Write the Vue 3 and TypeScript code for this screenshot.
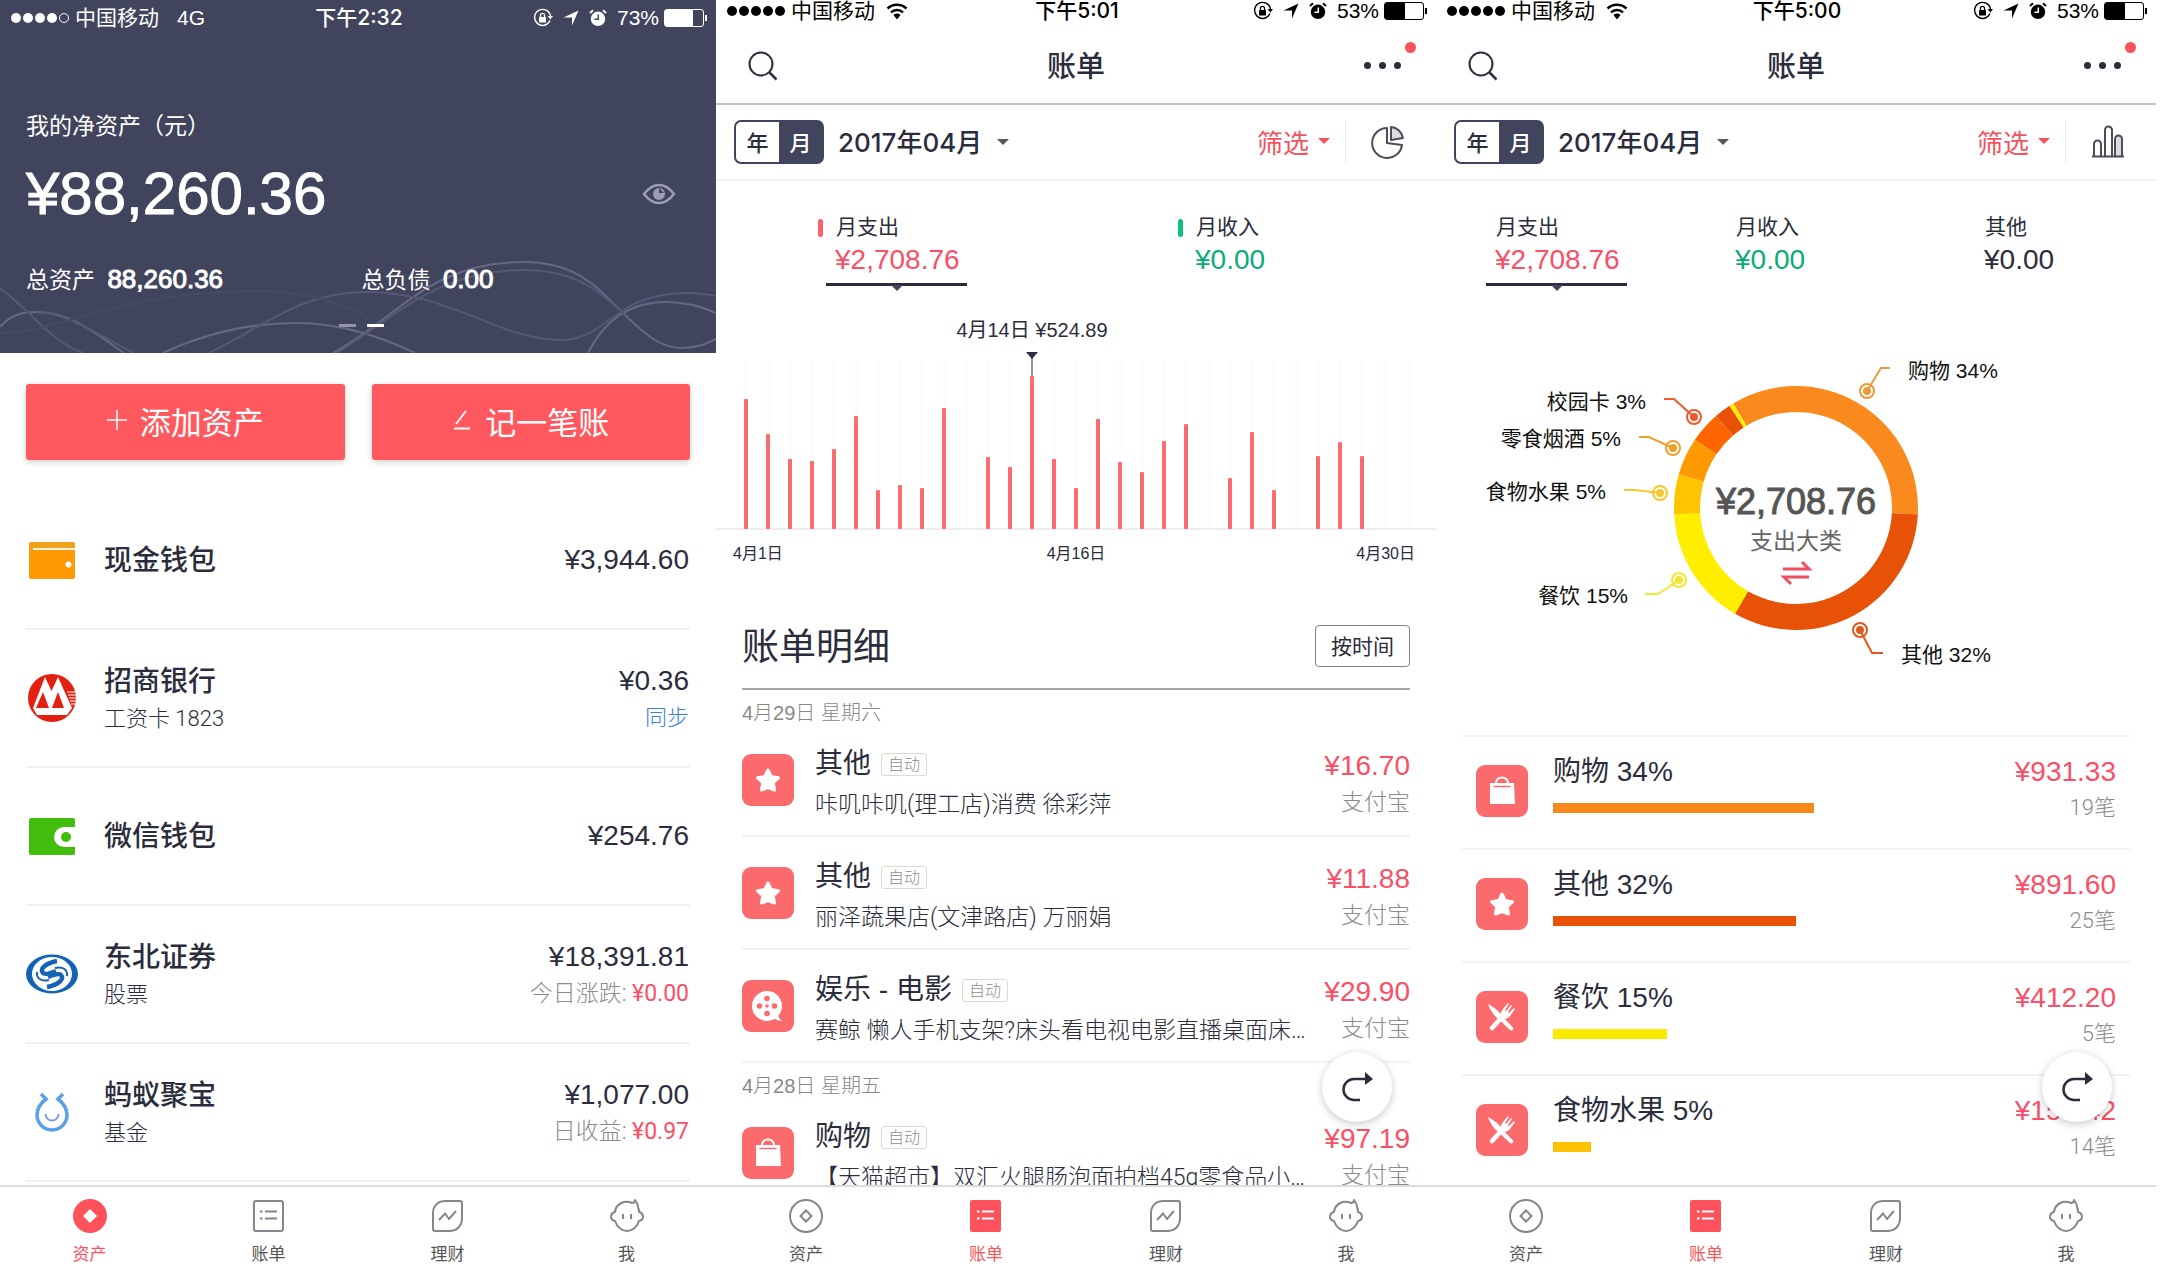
<script setup lang="ts">
interface Phone {
  id: string
  kind: 'assets' | 'bars' | 'donut'
  time: string
  battery: number
  dark: boolean
}

const phones: Phone[] = [
  { id: 'p1', kind: 'assets', time: '下午2:32', battery: 73, dark: true },
  { id: 'p2', kind: 'bars', time: '下午5:01', battery: 53, dark: false },
  { id: 'p3', kind: 'donut', time: '下午5:00', battery: 53, dark: false },
]

const accounts = [
  { icon: 'cash', name: '现金钱包', sub: '', amount: '¥3,944.60', note: '', value: '', link: '' },
  { icon: 'cmb', name: '招商银行', sub: '工资卡 1823', amount: '¥0.36', note: '', value: '', link: '同步' },
  { icon: 'wechat', name: '微信钱包', sub: '', amount: '¥254.76', note: '', value: '', link: '' },
  { icon: 'stock', name: '东北证券', sub: '股票', amount: '¥18,391.81', note: '今日涨跌:', value: '¥0.00', link: '' },
  { icon: 'ant', name: '蚂蚁聚宝', sub: '基金', amount: '¥1,077.00', note: '日收益:', value: '¥0.97', link: '' },
]

const tabs = [
  { icon: 'coin', label: '资产' },
  { icon: 'list', label: '账单' },
  { icon: 'leaf', label: '理财' },
  { icon: 'face', label: '我' },
]

function isActive(phone: Phone, icon: string): boolean {
  return icon === (phone.kind === 'assets' ? 'coin' : 'list')
}

const barStats = [
  { label: '月支出', value: '¥2,708.76', tone: 'red', current: true },
  { label: '月收入', value: '¥0.00', tone: 'green', current: false },
]
const donutStats = [...barStats, { label: '其他', value: '¥0.00', tone: 'ink', current: false }]

const dayHeights: number[] = [
  130, 95, 70, 68, 80, 113, 39, 44, 41, 121, 0, 72, 62, 153, 70, 41, 110, 67, 57, 88, 105, 0, 51, 97, 39, 0, 73, 87,
  73, 0,
]
const dayX = (index: number): number => 30 + index * 22

const groups = [
  {
    date: '4月29日 星期六',
    items: [
      { icon: 'star', title: '其他', desc: '咔叽咔叽(理工店)消费 徐彩萍', amount: '¥16.70' },
      { icon: 'star', title: '其他', desc: '丽泽蔬果店(文津路店) 万丽娟', amount: '¥11.88' },
      { icon: 'reel', title: '娱乐 - 电影', desc: '赛鲸 懒人手机支架?床头看电视电影直播桌面床…', amount: '¥29.90' },
    ],
  },
  {
    date: '4月28日 星期五',
    items: [{ icon: 'bag', title: '购物', desc: '【天猫超市】双汇火腿肠泡面拍档45g零食品小…', amount: '¥97.19' }],
  },
]

const slices = [
  { from: -31, to: 93, color: '#fa8a1e' },
  { from: 93, to: 210, color: '#e85206' },
  { from: 210, to: 267, color: '#ffee00' },
  { from: 267, to: 286, color: '#ffc400' },
  { from: 286, to: 304, color: '#ff9900' },
  { from: 304, to: 319, color: '#ff6600' },
  { from: 319, to: 327, color: '#e85206' },
  { from: 327, to: 329, color: '#ffee00' },
]

function slicePath(from: number, to: number): string {
  const point = (deg: number, r: number): string => {
    const a = (deg * Math.PI) / 180
    return `${360 + r * Math.sin(a)} ${508 - r * Math.cos(a)}`
  }
  return `M${point(from, 122)}A122 122 0 0 1 ${point(to, 122)}L${point(to, 96)}A96 96 0 0 0 ${point(from, 96)}Z`
}

const callouts = [
  { text: '购物 34%', x: 472, y: 378, anchor: 'start', cx: 431, cy: 391, line: '431,391 445,368 454,368', color: '#ee9a3a' },
  { text: '校园卡 3%', x: 210, y: 409, anchor: 'end', cx: 258, cy: 417, line: '258,417 238,399 228,399', color: '#ee5a2c' },
  { text: '零食烟酒 5%', x: 185, y: 446, anchor: 'end', cx: 237, cy: 448, line: '237,448 213,437 203,437', color: '#eba02c' },
  { text: '食物水果 5%', x: 170, y: 499, anchor: 'end', cx: 224, cy: 493, line: '224,493 199,490 188,490', color: '#f3c92c' },
  { text: '餐饮 15%', x: 192, y: 603, anchor: 'end', cx: 243, cy: 580, line: '243,580 222,594 209,594', color: '#f3e72c' },
  { text: '其他 32%', x: 465, y: 662, anchor: 'start', cx: 424, cy: 630, line: '424,630 436,653 447,653', color: '#e2571c' },
]

const categories = [
  { icon: 'bag', title: '购物 34%', bar: 261, color: '#f68a1f', amount: '¥931.33', count: '19笔' },
  { icon: 'star', title: '其他 32%', bar: 243, color: '#e85206', amount: '¥891.60', count: '25笔' },
  { icon: 'fork', title: '餐饮 15%', bar: 114, color: '#faea00', amount: '¥412.20', count: '5笔' },
  { icon: 'fork', title: '食物水果 5%', bar: 38, color: '#fcc200', amount: '¥150.42', count: '14笔' },
]
</script>

<template>
  <svg class="sprite" aria-hidden="true">
    <symbol id="i-lock" viewBox="0 0 20 20">
      <path d="M17 12.500A8 8 0 1 1 17.500 8" fill="none" stroke="currentColor" stroke-width="1.400" />
      <path d="M14.500 8H20L17.300 11.500Z" fill="currentColor" />
      <rect x="6" y="9" width="7" height="5.500" rx=".6" fill="currentColor" />
      <path d="M7.500 9V7.300a2 2 0 0 1 4 0V9" fill="none" stroke="currentColor" stroke-width="1.300" />
    </symbol>
    <symbol id="i-arrow" viewBox="0 0 16 16"><path d="M15.500.5 9 15.500V7.500H.5Z" fill="currentColor" /></symbol>
    <symbol id="i-alarm" viewBox="0 0 18 18">
      <circle cx="9" cy="9.800" r="7.200" fill="currentColor" />
      <path d="M1 4 4 1.300M17 4 14 1.300" stroke="currentColor" stroke-width="2" />
      <path d="M9.300 5.500V10.300H5.500" fill="none" stroke="var(--bar-bg)" stroke-width="1.500" />
    </symbol>
    <symbol id="i-wifi" viewBox="0 0 22 17">
      <path d="M1.500 5.500a14 14 0 0 1 19 0M5 9.300a9 9 0 0 1 12 0" fill="none" stroke="currentColor" stroke-width="2.400" />
      <path d="M7.500 12a5 5 0 0 1 7 0L11 16.500Z" fill="currentColor" />
    </symbol>

    <symbol id="i-cash" viewBox="0 0 52 52">
      <rect x="3" y="8" width="46" height="37" rx="2" fill="#ff9a05" />
      <path d="M3 14V10a2 2 0 0 1 2-2H47a2 2 0 0 1 2 2V14Z" fill="#efa21c" />
      <path d="M7 15H49" stroke="#fff3dc" stroke-width="2" />
      <circle cx="42.500" cy="30.500" r="3" fill="#fff" />
    </symbol>
    <symbol id="i-cmb" viewBox="0 0 52 52">
      <circle cx="26" cy="26" r="24" fill="#e3200f" />
      <path d="M7 36 19 5 25.500 19 32 5 46 36 41 43H11Z" fill="#fff" />
      <path d="M10 36 17 20 23 36ZM26 36 32 20 38 36Z" fill="#e3200f" />
      <path d="M41 20H50M42 23H50M43 26H50M44 29H50M45 32H50" stroke="#fff" stroke-width="1" />
    </symbol>
    <symbol id="i-wechat" viewBox="0 0 52 52">
      <path d="M5 8H47a2 2 0 0 1 2 2V17H38a10 10 0 0 0 0 20H49V43a2 2 0 0 1-2 2H5a2 2 0 0 1-2-2V10a2 2 0 0 1 2-2Z" fill="#42bd0c" />
      <circle cx="40" cy="27" r="5" fill="#42bd0c" />
    </symbol>
    <symbol id="i-stock" viewBox="0 0 52 52">
      <path d="M26 6.500A26 19.500 0 0 1 26 45.500A26 19.500 0 0 1 26 6.500ZM26 9A20 17 0 0 0 26 43A20 17 0 0 0 26 9Z" fill="#1463b4" />
      <g fill="none" stroke="#1463b4">
        <path d="M31 13C20 15 13 21 17 25C19 27 25 25 30 23M21 39C32 37 39 31 35 27C33 25 27 27 22 29" stroke-width="4.500" />
        <path d="M11 24C10 30 15 34 23 32M41 28C42 22 37 18 29 20" stroke-width="2" />
      </g>
    </symbol>
    <symbol id="i-ant" viewBox="0 0 52 52" fill="none" stroke="#5b9fe8" stroke-width="3.500">
      <path d="M15 8 20 13Q11 20 11 29A15 15 0 0 0 41 29Q41 20 32 13L37 8" />
      <path d="M19.500 28A6.500 6.500 0 0 0 32.500 28" stroke-width="2" stroke="#7fa0e8" />
    </symbol>

    <symbol id="i-star" viewBox="0 0 52 52">
      <path d="M26 16 29.300 22.600 36.500 23.700 31.300 28.800 32.500 36 26 33.500 19.500 36 20.700 28.800 15.500 23.700 22.700 22.600Z" fill="#fff" stroke="#fff" stroke-width="3" stroke-linejoin="round" />
    </symbol>
    <symbol id="i-bag" viewBox="0 0 52 52">
      <path d="M14 18H38L39 39H14Z" fill="#fff" />
      <path d="M20 20V18a6 5.500 0 0 1 12 0v2" fill="none" stroke="#fff" stroke-width="2" />
      <path d="M18 21.500H34" stroke="#fb6b6d" stroke-width="1.500" stroke-linecap="round" />
    </symbol>
    <symbol id="i-reel" viewBox="0 0 52 52">
      <circle cx="25" cy="26" r="15" fill="#fff" />
      <path d="M30 37Q35 41 40 41Q36 38 36 34" fill="#fff" />
      <g fill="#fb6b6d">
        <circle cx="25" cy="18.500" r="2.800" /><circle cx="25" cy="33.500" r="2.800" /><circle cx="17.500" cy="26" r="2.800" />
        <circle cx="32.500" cy="26" r="2.800" /><circle cx="25" cy="26" r="1.800" />
      </g>
    </symbol>
    <symbol id="i-fork" viewBox="0 0 52 52">
      <path d="M12 13C18 16 23 20 26 25L37 36.500A2 2 0 0 1 34 39L23 28.500C18 25 14 19 12 13Z" fill="#fff" />
      <path d="M27 25 16 37" stroke="#fff" stroke-width="4.500" stroke-linecap="round" />
      <path d="M25 27C23 22 26 20 27 18L32 12 33 13 29 19 30 20 35 14 36 15 32 21 33 22 38 17 39 18 34 25C32 28 28 28 26 28Z" fill="#fff" />
    </symbol>

    <symbol id="i-coin" viewBox="0 0 34 34" fill="none" stroke="currentColor" stroke-width="2">
      <circle cx="17" cy="17" r="16" /><path d="M17 11.500 22.500 17 17 22.500 11.500 17Z" />
    </symbol>
    <symbol id="i-coin-on" viewBox="0 0 34 34">
      <circle cx="17" cy="17" r="17" fill="currentColor" /><path d="M17 10 24 17 17 24 10 17Z" fill="#fff" />
    </symbol>
    <symbol id="i-list" viewBox="0 0 34 34" fill="none" stroke="currentColor" stroke-width="2">
      <rect x="2" y="2" width="29" height="30" rx="2" /><path d="M8 12.500H10.500M13 12.500H25M8 19.500H10.500M13 19.500H25" />
    </symbol>
    <symbol id="i-list-on" viewBox="0 0 34 34">
      <rect x="1" y="1" width="31" height="32" rx="2" fill="currentColor" />
      <path d="M8 12.500H10.500M13 12.500H25M8 19.500H10.500M13 19.500H25" stroke="#fff" stroke-width="2" />
    </symbol>
    <symbol id="i-leaf" viewBox="0 0 34 34" fill="none" stroke="currentColor" stroke-width="2">
      <path d="M14 2H29a2 2 0 0 1 2 2V19C31 27 26 32 18 32H4a2 2 0 0 1-2-2V14C2 7 7 2 14 2Z" />
      <path d="M8 21 14 14.500 18 20 25 12" />
    </symbol>
    <symbol id="i-face" viewBox="0 0 34 34" fill="none" stroke="currentColor" stroke-width="2" stroke-linejoin="round">
      <path d="M5 13C6 4 15 1 22 4Q25 4 25 1Q28 5 28 8Q29 10 29 13Q33 14 33 18Q33 21 29 22C27 28 22 32 17 32C12 32 7 28 5 22Q1 21 1 18Q1 14 5 13Z" />
      <path d="M13 15V20M21 15V20" />
    </symbol>

    <symbol id="i-pie" viewBox="0 0 34 34" fill="none" stroke="#4c4d58" stroke-width="2" stroke-linejoin="round">
      <path d="M16 3A15 15 0 1 0 31 20L16 18Z" /><path d="M20 2A13 13 0 0 1 32 13L20 15Z" fill="#dcdce0" />
    </symbol>
    <symbol id="i-cols" viewBox="0 0 34 34" fill="none" stroke="#4c4d58" stroke-width="2">
      <path d="M3 31V19a3.500 3.500 0 0 1 7 0V31M14 31V5a3 3 0 0 1 7 0V31" />
      <path d="M24 31V14a3.500 3.500 0 0 1 7 0V31" fill="#dcdce0" /><path d="M1 31.500H33" />
    </symbol>
  </svg>

  <main class="board">
    <article v-for="phone in phones" :key="phone.id" class="phone">
      <div class="status" :class="{ dark: phone.dark }">
        <div class="carrier">
          <i v-for="n in 5" :key="n" class="dot" :class="{ hollow: phone.dark && n === 5 }"></i>
          <span class="operator">中国移动</span>
          <span v-if="phone.dark" class="network">4G</span>
          <svg v-else class="wifi"><use href="#i-wifi" /></svg>
        </div>
        <span class="clock">{{ phone.time }}</span>
        <div class="power">
          <svg class="s20"><use href="#i-lock" /></svg>
          <svg class="s16"><use href="#i-arrow" /></svg>
          <svg class="s18"><use href="#i-alarm" /></svg>
          <span>{{ phone.battery }}%</span>
          <span class="battery"><span class="charge" :style="{ width: phone.battery + '%' }"></span></span>
        </div>
      </div>

      <template v-if="phone.kind === 'assets'">
        <header class="hero">
          <svg class="waves" viewBox="0 255 716 97" preserveAspectRatio="none" fill="none" aria-hidden="true">
            <g stroke="#666983" stroke-width="2">
              <path d="M0 326C12 312 26 311 37 311C70 311 95 332 124 352" />
              <path d="M163 352C210 330 255 322 296 322C345 322 385 338 415 352" />
              <path d="M333 352C400 315 430 261 523 261C580 261 600 290 624 313C645 333 660 347 682 347C698 347 708 342 716 338" />
              <path d="M588 352C605 318 630 301 666 301C690 301 705 307 716 312" />
            </g>
            <g stroke="#565973" stroke-width="2">
              <path d="M0 287C30 309 50 340 83 352" />
              <path d="M37 311C65 311 100 335 134 352" />
              <path d="M209 352C265 325 300 291 367 291C450 291 500 339 560 339C610 339 610 292 689 292C700 292 710 294 716 295" />
              <path d="M337 352C400 312 440 269 523 269C575 269 600 290 624 313" />
            </g>
            <path d="M0 332C60 332 120 290 255 290C300 290 340 300 370 318" stroke="#474a64" stroke-width="2" />
          </svg>
          <p class="hero-label">我的净资产（元）</p>
          <div class="hero-line">
            <strong class="net">¥88,260.36</strong>
            <button class="eye" aria-label="隐藏金额">
              <svg viewBox="0 0 34 22" width="34" height="22">
                <path d="M2 11Q9 2 17 2T32 11Q25 20 17 20T2 11Z" fill="none" stroke="#9b9db0" stroke-width="2.500" />
                <circle cx="17" cy="11" r="6" fill="#9b9db0" /><path d="M17 5V10H22" fill="#41445d" />
              </svg>
            </button>
          </div>
          <div class="totals">
            <p>总资产 <b>88,260.36</b></p>
            <p>总负债 <b>0.00</b></p>
          </div>
          <div class="pager"><i></i><i class="on"></i></div>
        </header>
        <div class="scroll">
          <div class="actions">
            <button>
              <svg width="20" height="20" viewBox="0 0 20 20"><path d="M10 0V20M0 10H20" stroke="#fff" stroke-width="1.500" /></svg>
              添加资产
            </button>
            <button>
              <svg width="20" height="20" viewBox="0 0 20 20" fill="none" stroke="#fff" stroke-width="1.800">
                <path d="M14 1 4 14M2 18.500H18" />
              </svg>
              记一笔账
            </button>
          </div>
          <ul class="accounts">
            <li v-for="a in accounts" :key="a.name">
              <svg class="s52"><use :href="'#i-' + a.icon" /></svg>
              <div class="grow">
                <p class="acct-name">{{ a.name }}</p>
                <p v-if="a.sub" class="acct-sub">{{ a.sub }}</p>
              </div>
              <div class="right">
                <p class="money acct-money">{{ a.amount }}</p>
                <p v-if="a.link" class="acct-sub"><a href="#sync">{{ a.link }}</a></p>
                <p v-if="a.note" class="acct-sub muted note">{{ a.note }} <span class="red">{{ a.value }}</span></p>
              </div>
            </li>
          </ul>
        </div>
      </template>

      <template v-else>
        <header class="nav">
          <button class="search" aria-label="搜索">
            <svg width="30" height="30" viewBox="0 0 30 30" fill="none" stroke="#2c2d3c" stroke-width="2">
              <circle cx="13" cy="13" r="11.500" /><path d="M21.500 21.500 28.500 28.500" stroke-width="2.500" />
            </svg>
          </button>
          <h1>账单</h1>
          <button class="more" aria-label="更多"><i></i><i></i><i></i><span class="badge"></span></button>
        </header>
        <div class="toolbar">
          <div class="segment"><button>年</button><button class="on">月</button></div>
          <select class="month" aria-label="月份"><option>2017年04月</option></select>
          <i class="caret"></i>
          <button class="filter">筛选 <i class="caret"></i></button>
          <button class="view" aria-label="切换图表">
            <svg width="34" height="34"><use :href="phone.kind === 'bars' ? '#i-pie' : '#i-cols'" /></svg>
          </button>
        </div>
        <div class="stats" :class="phone.kind">
          <div v-for="s in phone.kind === 'bars' ? barStats : donutStats" :key="s.label" class="stat">
            <p class="stat-label" :class="'mark-' + s.tone">{{ s.label }}</p>
            <p class="money" :class="s.tone">{{ s.value }}</p>
            <i v-if="s.current" class="underline"></i>
          </div>
        </div>

        <div v-if="phone.kind === 'bars'" class="scroll">
          <svg class="chart" viewBox="0 290 720 280">
            <path v-for="(h, i) in dayHeights" :key="i" :d="`M${dayX(i)} 360V528`" stroke="#f6f6f6" />
            <path d="M692 360V528" stroke="#f6f6f6" />
            <path d="M0 529H720" stroke="#ececef" stroke-width="2" />
            <rect v-for="(h, i) in dayHeights" :key="'b' + i" :x="dayX(i) - 2" :y="529 - h" width="4" :height="h" rx="1" fill="#fb6b6f" />
            <path d="M316 358V376" stroke="#2c2d3c" /><path d="M310 352H322L316 359Z" fill="#2c2d3c" />
            <text class="tip" x="316" y="337" text-anchor="middle">4月14日 ¥524.89</text>
            <g class="axis">
              <text x="17" y="559">4月1日</text>
              <text x="360" y="559" text-anchor="middle">4月16日</text>
              <text x="699" y="559" text-anchor="end">4月30日</text>
            </g>
          </svg>
          <section class="detail">
            <div class="detail-head"><h2>账单明细</h2><button>按时间</button></div>
            <template v-for="g in groups" :key="g.date">
              <h3>{{ g.date }}</h3>
              <ul class="bills">
                <li v-for="(b, i) in g.items" :key="i">
                  <svg class="s52 tile"><use :href="'#i-' + b.icon" /></svg>
                  <div class="grow">
                    <p class="bill-title">{{ b.title }}<span class="tag">自动</span></p>
                    <p class="bill-desc">{{ b.desc }}</p>
                  </div>
                  <div class="right">
                    <p class="money red">{{ b.amount }}</p>
                    <p class="muted pay">支付宝</p>
                  </div>
                </li>
              </ul>
            </template>
          </section>
        </div>

        <div v-else class="scroll">
          <svg class="chart" viewBox="0 290 720 445">
            <path v-for="s in slices" :key="s.from" :d="slicePath(s.from, s.to)" :fill="s.color" />
            <g v-for="c in callouts" :key="c.text">
              <polyline :points="c.line" fill="none" :stroke="c.color" stroke-width="2" />
              <circle :cx="c.cx" :cy="c.cy" r="7" fill="none" :stroke="c.color" stroke-width="2" />
              <circle :cx="c.cx" :cy="c.cy" r="4" :fill="c.color" />
              <text class="callout" :x="c.x" :y="c.y" :text-anchor="c.anchor">{{ c.text }}</text>
            </g>
            <text class="sum" x="360" y="514" text-anchor="middle">¥2,708.76</text>
            <text class="sum-label" x="360" y="549" text-anchor="middle">支出大类</text>
            <path d="M347 569H373L366 562M373 577H348L355 584" fill="none" stroke="#ee4f5c" stroke-width="3" />
          </svg>
          <ul class="cats">
            <li v-for="c in categories" :key="c.title">
              <svg class="s52 tile"><use :href="'#i-' + c.icon" /></svg>
              <div class="grow">
                <p class="cat-title">{{ c.title }}</p>
                <div class="meter" :style="{ width: c.bar + 'px', background: c.color }"></div>
              </div>
              <div class="right">
                <p class="money red">{{ c.amount }}</p>
                <p class="muted count">{{ c.count }}</p>
              </div>
            </li>
          </ul>
        </div>

        <button class="fab" aria-label="分享">
          <svg width="32" height="30" viewBox="0 0 32 30">
            <path d="M26 7H13A10.500 10.500 0 0 0 13 28H19" fill="none" stroke="#2c2d3c" stroke-width="2.500" />
            <path d="M24 0 32 7 24 13Z" fill="#2c2d3c" />
          </svg>
        </button>
      </template>

      <nav class="tabs">
        <a v-for="t in tabs" :key="t.icon" href="#tab" :class="{ on: isActive(phone, t.icon) }">
          <svg width="34" height="34"><use :href="'#i-' + t.icon + (isActive(phone, t.icon) ? '-on' : '')" /></svg>
          {{ t.label }}
        </a>
      </nav>
    </article>
  </main>
</template>

<style>
body {
  margin: 0;
  background: #fff;
}
</style>

<style scoped>
.sprite {
  position: absolute;
  width: 0;
  height: 0;
}
.board {
  display: grid;
  grid-template-columns: 716fr 720fr 720fr 4fr;
  height: 100vh;
  font-family: 'Liberation Sans', 'Noto Sans CJK SC', sans-serif;
  color: #2c2d3c;
}
.phone {
  position: relative;
  display: flex;
  flex-direction: column;
  min-width: 0;
  min-height: 0;
}
p,
h1,
h2,
h3,
ul {
  margin: 0;
  padding: 0;
  list-style: none;
}
button,
select {
  padding: 0;
  border: 0;
  background: none;
  color: inherit;
  font-family: inherit;
  cursor: pointer;
}
a {
  text-decoration: none;
  color: #3a7fdc;
}
svg {
  display: block;
  flex: none;
}
.grow {
  flex: 1;
  min-width: 0;
}
.right {
  text-align: right;
  white-space: nowrap;
}
.red {
  color: #fa4f66;
}
.green {
  color: #0bab79;
}
.muted {
  color: #8c8c8c;
}
.money {
  font-size: 28px;
  line-height: 34px;
}
.s16 {
  width: 16px;
  height: 16px;
}
.s18 {
  width: 18px;
  height: 18px;
}
.s20 {
  width: 20px;
  height: 20px;
}
.s52 {
  width: 52px;
  height: 52px;
}

.status {
  --bar-bg: #fff;
  display: grid;
  grid-template-columns: 1fr auto 1fr;
  align-items: center;
  height: 20px;
  padding: 0 9px 0 11px;
  font-size: 21px;
  line-height: 22px;
  color: #000;
}
.status.dark {
  --bar-bg: #41445d;
  height: 36px;
  background: #41445d;
  color: #fff;
}
.carrier,
.power {
  display: flex;
  align-items: center;
}
.dot {
  box-sizing: border-box;
  width: 10px;
  height: 10px;
  margin-right: 2px;
  border-radius: 50%;
  background: currentColor;
}
.dot.hollow {
  border: 1px solid #fff;
  background: none;
}
.operator {
  margin-left: 4px;
}
.network {
  margin-left: 18px;
}
.wifi {
  width: 22px;
  height: 17px;
  margin-left: 11px;
}
.clock {
  font-family: Inter, 'Noto Sans CJK SC', sans-serif;
  font-weight: 500;
}
.power {
  justify-content: flex-end;
  gap: 10px;
}
.battery {
  position: relative;
  box-sizing: border-box;
  width: 40px;
  height: 18px;
  margin: 0 3px 0 -5px;
  border: 1px solid currentColor;
  border-radius: 3px;
}
.battery::after {
  content: '';
  position: absolute;
  right: -4px;
  top: 5px;
  width: 2px;
  height: 6px;
  background: currentColor;
}
.charge {
  display: block;
  height: 100%;
  background: currentColor;
}

.hero {
  position: relative;
  padding: 76px 19px 0 26px;
  background: #41445d;
  color: #fff;
}
.waves {
  position: absolute;
  left: 0;
  bottom: 0;
  width: 100%;
  height: 97px;
}
.hero-label {
  font-size: 23px;
  line-height: 28px;
}
.hero-line {
  display: flex;
  align-items: center;
  justify-content: space-between;
  margin-top: 18px;
  padding-right: 21px;
}
.net {
  font-size: 60px;
  line-height: 72px;
  font-weight: 400;
  -webkit-text-stroke: 1px #fff;
}
.totals {
  position: relative;
  display: grid;
  grid-template-columns: 1fr 1fr;
  margin-top: 34px;
  font-size: 23px;
  line-height: 30px;
}
.totals b {
  margin-left: 6px;
  font-size: 26px;
  font-weight: 400;
  -webkit-text-stroke: 1px #fff;
}
.pager {
  position: relative;
  display: flex;
  justify-content: center;
  gap: 11px;
  padding: 29px 0 26px;
}
.pager i {
  width: 17px;
  height: 3px;
  background: #9496a8;
}
.pager .on {
  background: #fff;
}
.scroll {
  flex: 1;
  min-height: 0;
  overflow: hidden;
}
.actions {
  display: grid;
  grid-template-columns: 1fr 1fr;
  gap: 27px;
  padding: 31px 26px 32px;
}
.actions button {
  display: flex;
  align-items: center;
  justify-content: center;
  gap: 13px;
  height: 76px;
  padding-bottom: 4px;
  border-radius: 3px;
  background: #ff595f;
  box-shadow: 0 2px 6px rgba(0, 0, 0, 0.2);
  color: #fff;
  font-size: 31px;
}
.accounts {
  padding: 0 26px;
}
.accounts li {
  box-sizing: border-box;
  display: flex;
  align-items: center;
  height: 138px;
  border-bottom: 2px solid #f1f1f2;
}
.accounts .grow {
  padding: 2px 0 0 26px;
}
.accounts .right {
  padding-right: 1px;
}
.acct-name {
  font-size: 28px;
  line-height: 40px;
  font-weight: 500;
}
.acct-money {
  line-height: 40px;
}
.acct-sub {
  font-family: Roboto, 'Noto Sans CJK SC', sans-serif;
  font-size: 22px;
  line-height: 34px;
  font-weight: 300;
}
.note {
  font-size: 23px;
}
.note .red {
  font-weight: 400;
}

.nav {
  box-sizing: border-box;
  display: grid;
  grid-template-columns: 1fr auto 1fr;
  align-items: center;
  height: 85px;
  padding: 8px 32px 0 32px;
  border-bottom: 2px solid #c4c4c8;
}
.nav h1 {
  padding-top: 2px;
  font-size: 29px;
  line-height: 36px;
  font-weight: 500;
}
.search {
  justify-self: start;
}
.more {
  position: relative;
  justify-self: end;
  display: flex;
  gap: 8px;
  padding: 8px 3px;
}
.more i {
  width: 7px;
  height: 7px;
  border-radius: 50%;
  background: #2c2d3c;
}
.badge {
  position: absolute;
  right: -12px;
  top: -12px;
  width: 11px;
  height: 11px;
  border-radius: 50%;
  background: #f8525a;
}
.toolbar {
  box-sizing: border-box;
  display: flex;
  align-items: center;
  height: 76px;
  padding: 0 31px 0 18px;
  border-bottom: 2px solid #f3f3f6;
}
.segment {
  display: flex;
  border: 2px solid #41445d;
  border-radius: 7px;
  margin-right: 14px;
}
.segment button {
  width: 43px;
  height: 40px;
  padding-bottom: 2px;
  font-size: 22px;
  font-weight: 500;
}
.segment .on {
  background: #41445d;
  color: #fff;
}
.month {
  appearance: none;
  font-family: Inter, 'Noto Sans CJK SC', sans-serif;
  font-size: 26px;
  font-weight: 500;
}
.caret {
  display: inline-block;
  margin-left: 14px;
  border: 6px solid transparent;
  border-top-color: #55565f;
  border-bottom: 0;
}
.filter {
  display: flex;
  align-items: center;
  margin-left: auto;
  padding-bottom: 2px;
  color: #f4525f;
  font-size: 26px;
}
.filter .caret {
  margin-left: 9px;
  border-top-color: #f4525f;
}
.view {
  margin-left: 15px;
  padding: 5px 0 5px 25px;
  border-left: 1px solid #ececef;
}
.stats {
  display: grid;
  height: 109px;
}
.stats.bars {
  grid-template-columns: 1fr 1fr;
}
.stats.donut {
  grid-template-columns: 240fr 249fr 231fr;
}
.stat {
  padding: 34px 0 0 60px;
}
.bars .stat {
  padding-left: 120px;
}
.stat .money {
  margin-left: -1px;
}
.stat-label {
  position: relative;
  font-size: 21px;
  line-height: 24px;
  margin-bottom: 4px;
}
.bars .stat-label::before {
  content: '';
  position: absolute;
  left: -18px;
  top: 4px;
  width: 5px;
  height: 18px;
  border-radius: 3px;
  background: #fb6067;
}
.bars .mark-green::before {
  background: #0fbf84;
}
.underline {
  position: relative;
  display: block;
  width: 141px;
  height: 3px;
  margin: 6px 0 0 -10px;
  background: #2c2d3c;
}
.underline::after {
  content: '';
  position: absolute;
  left: 65px;
  top: 2px;
  border: 6px solid transparent;
  border-top-color: #41445d;
  border-bottom: 0;
}
.chart {
  width: 100%;
  height: auto;
}
.tip {
  font-size: 20px;
  fill: #2c2d3c;
}
.axis {
  font-size: 16px;
  fill: #2c2d3c;
}
.callout {
  font-size: 21px;
  fill: #111;
}
.sum {
  font-size: 36px;
  fill: #555;
  stroke: #555;
  stroke-width: 1px;
}
.sum-label {
  font-size: 23px;
  fill: #666;
}

.detail {
  padding: 0 26px;
}
.detail-head {
  display: flex;
  align-items: center;
  justify-content: space-between;
  padding: 52px 0 18px;
  border-bottom: 2px solid #a5a5a9;
}
.detail-head h2 {
  box-sizing: border-box;
  height: 48px;
  padding-top: 2px;
  font-size: 37px;
  line-height: 48px;
  font-weight: 400;
}
.detail-head button {
  width: 95px;
  height: 42px;
  padding-bottom: 2px;
  border: 1px solid #808088;
  border-radius: 4px;
  font-size: 21px;
}
.detail h3 {
  padding: 11px 0 0;
  height: 23px;
  font-size: 20px;
  line-height: 24px;
  font-weight: 300;
  color: #888;
}
.bills li {
  box-sizing: border-box;
  display: flex;
  height: 113px;
  border-bottom: 2px solid #f3f3f5;
}
.tile {
  margin-top: 30px;
  border-radius: 9px;
  background: #fb6b6d;
}
.bills .grow {
  padding: 23px 0 0 21px;
  white-space: nowrap;
}
.bills .right {
  padding-top: 25px;
}
.bill-title {
  display: flex;
  align-items: center;
  font-size: 28px;
  line-height: 34px;
}
.tag {
  margin-left: 10px;
  padding: 0 6px;
  border: 1px solid #dcdacb;
  border-radius: 3px;
  font-size: 16px;
  line-height: 21px;
  font-weight: 300;
  color: #8d8d8d;
}
.bill-desc {
  margin-top: 9px;
  font-family: Roboto, 'Noto Sans CJK SC', sans-serif;
  font-size: 23px;
  line-height: 30px;
  font-weight: 300;
}
.pay {
  margin-top: 4px;
  font-size: 23px;
  line-height: 30px;
  font-weight: 300;
}
.cats {
  padding: 0 26px;
}
.cats li {
  box-sizing: border-box;
  display: flex;
  height: 113px;
  padding: 0 14px;
  border-top: 2px solid #f3f3f5;
}
.cats .tile {
  margin-top: 28px;
}
.cats .grow {
  padding: 18px 0 0 25px;
}
.cats .right {
  padding-top: 18px;
}
.cat-title {
  font-size: 28px;
  line-height: 34px;
}
.meter {
  height: 10px;
  margin-top: 14px;
}
.count {
  margin-top: 4px;
  font-family: Roboto, 'Noto Sans CJK SC', sans-serif;
  font-size: 22px;
  line-height: 30px;
  font-weight: 300;
}
.fab {
  position: absolute;
  right: 44px;
  bottom: 150px;
  display: flex;
  align-items: center;
  justify-content: center;
  width: 70px;
  height: 70px;
  border-radius: 50%;
  background: #fff;
  box-shadow: 0 2px 8px rgba(0, 0, 0, 0.22);
}
.tabs {
  box-sizing: border-box;
  display: grid;
  grid-template-columns: repeat(4, 1fr);
  flex: none;
  height: 87px;
  border-top: 2px solid #dcdcde;
  background: #fff;
}
.tabs a {
  display: flex;
  flex-direction: column;
  align-items: center;
  gap: 10px;
  padding-top: 12px;
  font-size: 17px;
  line-height: 24px;
  color: #555;
}
.tabs svg {
  color: #85868c;
}
.tabs .on,
.tabs .on svg {
  color: #fb525b;
}
</style>
